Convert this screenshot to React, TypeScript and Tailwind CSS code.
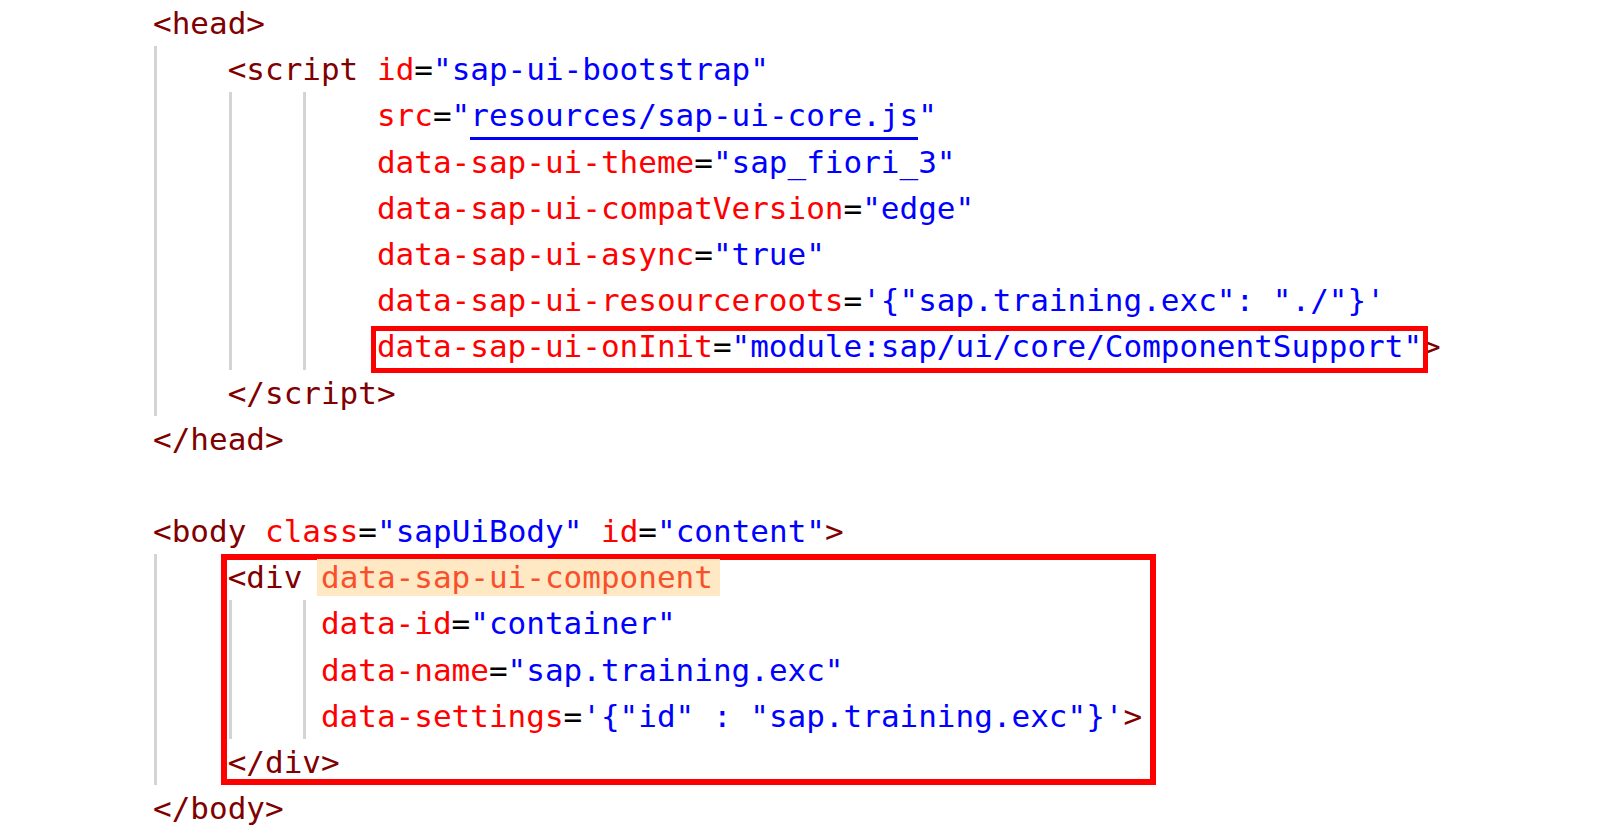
import type { ReactNode } from 'react'

// ── token colours (VS-style html highlighting) ─────────────────────────────
const Tag = ({ children }: { children: ReactNode }) => (
  <span className="text-[#800000]">{children}</span>
)
const Attr = ({ children }: { children: ReactNode }) => (
  <span className="text-[#ff0000]">{children}</span>
)
const Val = ({ children }: { children: ReactNode }) => (
  <span className="text-[#0000ff]">{children}</span>
)
const Eq = () => <span className="text-black">=</span>

function Line({ children }: { children?: ReactNode }) {
  return <div className="h-[46.2px] whitespace-pre">{children}</div>
}

// indent guide columns
function Guide4() {
  return (
    <div className="w-[4ch] shrink-0 bg-[linear-gradient(to_right,transparent_1px,#d4d4d4_1px,#d4d4d4_4px,transparent_4px)]" />
  )
}
function Guide1() {
  return (
    <div className="w-[1ch] shrink-0 bg-[linear-gradient(to_right,transparent_1px,#d4d4d4_1px,#d4d4d4_4px,transparent_4px)]" />
  )
}

export default function App() {
  return (
    <div className="min-h-screen bg-white pl-[153px] font-['DejaVu_Sans_Mono',monospace] text-[31px] leading-[46.2px] text-black">
      {/* head */}
      <Line><Tag>&lt;head&gt;</Tag></Line>
      <div className="flex">
        <Guide4 />
        <div className="flex flex-col">
          <Line>
            <Tag>&lt;script</Tag> <Attr>id</Attr><Eq /><Val>"sap-ui-bootstrap"</Val>
          </Line>
          <div className="flex">
            <Guide4 />
            <Guide4 />
            <div className="flex flex-col">
              <Line>
                <Attr>src</Attr><Eq /><Val>"<span className="border-b-[3px] border-[#0000ff] pb-[4px]">resources/sap-ui-core.js</span>"</Val>
              </Line>
              <Line>
                <Attr>data-sap-ui-theme</Attr><Eq /><Val>"sap_fiori_3"</Val>
              </Line>
              <Line>
                <Attr>data-sap-ui-compatVersion</Attr><Eq /><Val>"edge"</Val>
              </Line>
              <Line>
                <Attr>data-sap-ui-async</Attr><Eq /><Val>"true"</Val>
              </Line>
              <Line>
                <Attr>data-sap-ui-resourceroots</Attr><Eq /><Val>'{"{"}"sap.training.exc": "./"{"}"}'</Val>
              </Line>
              <Line>
                <span className="-mx-[3.5px] px-[3.5px] pb-[7px] outline-solid outline-[5.5px] outline-[#ff0000] outline-offset-[-3.5px]">
                  <Attr>data-sap-ui-onInit</Attr><Eq /><Val>"module:sap/ui/core/ComponentSupport"</Val>
                </span>
                <Tag>&gt;</Tag>
              </Line>
            </div>
          </div>
          <Line><Tag>&lt;/script&gt;</Tag></Line>
        </div>
      </div>
      <Line><Tag>&lt;/head&gt;</Tag></Line>
      <Line> </Line>

      {/* body */}
      <Line>
        <Tag>&lt;body</Tag> <Attr>class</Attr><Eq /><Val>"sapUiBody"</Val> <Attr>id</Attr><Eq /><Val>"content"</Val><Tag>&gt;</Tag>
      </Line>
      <div className="flex">
        <Guide4 />
        <div className="-ml-[7px] flex w-[935px] flex-col pl-[7px] shadow-[inset_0_0_0_6px_#ff0000]">
          <Line>
            <Tag>&lt;div</Tag>{' '}
            <span className="-ml-[4px] bg-[#ffe8c4] pb-[1px] pl-[4px] pr-[7px] text-[#f8502a]">data-sap-ui-component</span>
          </Line>
          <div className="flex">
            <Guide4 />
            <Guide1 />
            <div className="flex flex-col">
              <Line>
                <Attr>data-id</Attr><Eq /><Val>"container"</Val>
              </Line>
              <Line>
                <Attr>data-name</Attr><Eq /><Val>"sap.training.exc"</Val>
              </Line>
              <Line>
                <Attr>data-settings</Attr><Eq /><Val>'{"{"}"id" : "sap.training.exc"{"}"}'</Val><Tag>&gt;</Tag>
              </Line>
            </div>
          </div>
          <Line><Tag>&lt;/div&gt;</Tag></Line>
        </div>
      </div>
      <Line><Tag>&lt;/body&gt;</Tag></Line>
    </div>
  )
}
